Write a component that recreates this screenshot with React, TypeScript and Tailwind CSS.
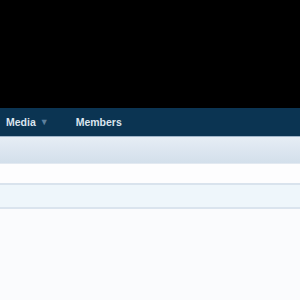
export default function App() {
  return (
    <div className="w-[300px] h-[300px] overflow-hidden bg-[#fafbfd] flex flex-col" style={{ fontFamily: '"Liberation Sans", Arial, sans-serif' }}>
      <div className="h-[108px] bg-black shrink-0" />
      <div className="h-[28px] shrink-0 bg-[#0b3452] flex items-center pt-[1px] text-[10.5px] font-bold text-[#dbe5ef]">
        <div className="pl-[6px] flex items-center gap-[4px]">
          <span>Media</span>
          <span className="text-[9px] text-[#5d7f9c]">▼</span>
        </div>
        <span className="ml-[27px]">Members</span>
      </div>
      <div className="h-[1px] shrink-0 bg-[#9fb4c8]" />
      <div className="h-[26px] shrink-0 bg-gradient-to-b from-[#e6edf5] to-[#d3dfeb]" />
      <div className="h-[1px] shrink-0 bg-[#e2e9f1]" />
      <div className="h-[19px] shrink-0 bg-[#fdfdfe]" />
      <div className="h-[2px] shrink-0 bg-[#d9e3ed]" />
      <div className="h-[22px] shrink-0 bg-[#eef6fb]" />
      <div className="h-[2px] shrink-0 bg-[#dae4ee]" />
      <div className="flex-1 bg-[#fafbfd]" />
    </div>
  );
}
